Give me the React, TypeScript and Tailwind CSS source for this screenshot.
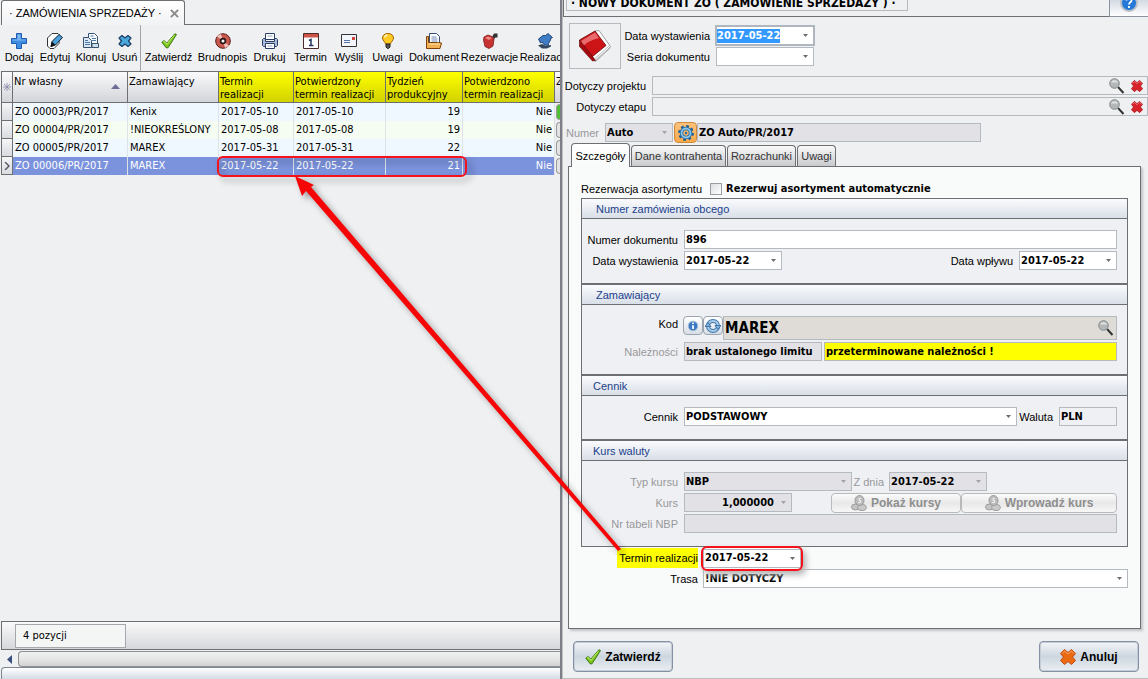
import type { ReactNode } from "react";
import clsx from "clsx";

const ui = "font-['Liberation_Sans',Arial,sans-serif] text-[11px] leading-4";
const tahoma = "font-['DejaVu_Sans_Condensed','DejaVu_Sans',sans-serif] text-[11px] leading-4";

/* ---------- toolbar icons ---------- */

const PlusIcon = () => (
  <svg viewBox="0 0 16 16" className="size-4">
    <path d="M5.500 .5h5v5h5v5h-5v5h-5v-5h-5v-5h5z" fill="#3f8be0" stroke="#1d5cae" />
    <path d="M6.500 1.500h3v5h5v1h-13v-1h5z" fill="#7db8f5" />
  </svg>
);

const EditIcon = () => (
  <svg viewBox="0 0 16 16" className="size-4">
    <path d="M.5 5L5 .5h6l1 1v9l-5 5H3L.5 13z" fill="#fff" stroke="#333" />
    <path d="M5 8.500L12 1.500l3.500 3L8.500 12l-4.500 1.500z" fill="#49a0dc" stroke="#123" />
    <path d="M5 8.500l3.500 3.500-5 2z" fill="#111" />
  </svg>
);

const CloneIcon = () => (
  <svg viewBox="0 0 16 16" className="size-4">
    <path d="M5.500 .5h6l3 3v8h-9z" fill="#f6fafd" stroke="#37526c" />
    <path d="M.5 4.500h5l3 3v7h-8z" fill="#dce9f4" stroke="#37526c" />
    <path d="M7.500 3h3M9 5.500h4M9 7.500h4M2 7.500h3M2 9.500h5M2 11.500h5" stroke="#4c7aa6" />
    <path d="M9 10.500h6.500v4H9z" fill="#cfe0ee" stroke="#37526c" />
  </svg>
);

const DeleteIcon = () => (
  <svg viewBox="0 0 16 16" className="size-4">
    <path d="M5 2.500L8 5l3-2.500 3 2.500-2.500 3 2.500 3-3 2.500L8 11l-3 2.500L2 11l2.500-3L2 5z" fill="#49a7dc" stroke="#1b3f66" strokeWidth="1.200" strokeLinejoin="round" />
  </svg>
);

const CheckIcon = ({ className = "size-4" }: { className?: string }) => (
  <svg viewBox="0 0 16 16" className={className}>
    <path d="M.8 9.200l2.400-1.700 2.600 2.700L13.800 .8l1.700.7L7 14.800H5.200z" fill="#7cc51d" stroke="#2f6d0c" strokeWidth=".9" />
    <path d="M2 9l1.200-.6 2.700 3L13.500 2" fill="none" stroke="#c3ef6c" />
  </svg>
);

const DiscIcon = () => (
  <svg viewBox="0 0 16 16" className="size-4">
    <circle cx="8" cy="8" r="7.300" fill="#c9584f" stroke="#591b1b" />
    <path d="M8 8L2 3.500A7 7 0 0 1 6 1zM8 8l6 4.500A7 7 0 0 1 10 15z" fill="#f3c4bb" />
    <circle cx="8" cy="8" r="3.200" fill="#2b1717" />
    <circle cx="8" cy="8" r="1.500" fill="#fff" />
  </svg>
);

const PrinterIcon = () => (
  <svg viewBox="0 0 16 16" className="size-4">
    <path d="M3.500 .5h9v6h-9z" fill="#fff" stroke="#2c3e63" />
    <path d="M1.500 5.500h2v3h9v-3h2l1 1v6l-1 1h-13l-1-1v-6z" fill="#a9bcd9" stroke="#2c3e63" />
    <path d="M3.500 10.500h9v5h-9z" fill="#fff" stroke="#2c3e63" />
    <path d="M5.500 3h5M5.500 13h5" stroke="#8fa4c6" />
  </svg>
);

const CalendarIcon = () => (
  <svg viewBox="0 0 16 16" className="size-4">
    <path d="M.5 .5h15v15H.5z" fill="#fff" stroke="#4c2a2a" />
    <path d="M1 1h14v3.500H1z" fill="#cc5548" />
    <path d="M6 7.500l2-1v6M6 12.500h4.500" fill="none" stroke="#26345f" strokeWidth="1.500" />
  </svg>
);

const MailIcon = () => (
  <svg viewBox="0 0 16 16" className="size-4">
    <path d="M.5 1.500h15v12H.5z" fill="#f2f5fb" stroke="#333" />
    <path d="M3 7.500h6M3 9.500h6" stroke="#5272a8" />
    <path d="M11 4h3v3h-3z" fill="#d2453b" />
  </svg>
);

const BulbIcon = () => (
  <svg viewBox="0 0 16 16" className="size-4">
    <path d="M8 .5c3.500 0 5.500 2 5.500 4.500S11 8.500 10.500 11h-5C5 8.500 2.500 7.500 2.500 5S4.500 .5 8 .5z" fill="#ffc926" stroke="#a86500" />
    <path d="M5 4.500C5 3 6 2 7.500 2" fill="none" stroke="#fff7c4" strokeWidth="1.500" />
    <path d="M6 11h4v3L8.500 15.500h-1L6 14z" fill="#555" stroke="#222" />
  </svg>
);

const FolderIcon = () => (
  <svg viewBox="0 0 16 16" className="size-4">
    <path d="M3.500 .5h7l3 3v8h-10z" fill="#fff" stroke="#3a4d78" />
    <path d="M5.500 4h5M5.500 6h6M5.500 8h6" stroke="#6f88b8" />
    <path d="M.5 3.500h2v6h9l4 .5-1.500 5.500H.5z" fill="#f0b055" stroke="#7c4308" />
    <path d="M3 11h11" stroke="#ffe0a5" />
  </svg>
);

const BarrelIcon = () => (
  <svg viewBox="0 0 16 16" className="size-4">
    <path d="M2 4l4-2 5 2 1 2-1 7-4 2.500-4-2L1.500 7z" fill="#c73232" stroke="#7c1717" strokeWidth=".8" />
    <path d="M3 5l3-1.500L10 5 7 7z" fill="#f08c83" />
    <path d="M10.500 3l1.500-2.500h3.500v4h-2L12 6z" fill="#333" />
  </svg>
);

const TransferIcon = () => (
  <svg viewBox="0 0 16 16" className="size-4">
    <path d="M1.500 6L6 2.500h2.500L11 .5l4.500 4-1.500.5-.5 2-2 3.500v2l-4-.5L5 9l-1.500 1z" fill="#3e7dc4" stroke="#173c70" strokeWidth=".9" />
    <path d="M1 12.500l4-1.500 4 2 5-1v1.500l-4 2H5z" fill="#33475f" />
  </svg>
);

/* ---------- form icons ---------- */

const BookIcon = () => (
  <svg viewBox="0 0 34 34" className="size-[34px]">
    <path d="M17 2l4-.5L32.500 17.500 31 20 17.500 32.500 14 27z" fill="#fff" stroke="#888" strokeWidth=".8" />
    <path d="M31 17L16.500 30M32 18.500L17 31.500" stroke="#999" strokeWidth=".7" />
    <path d="M1.500 11L17 2l11 14.500-13.500 11z" fill="#cc1417" stroke="#6c0508" strokeWidth=".8" />
    <path d="M3 12L17 3.500l4 5.500C14 11 8 13 5 18z" fill="#e86a6c" />
    <path d="M1.500 11L1.500 17.500 14.500 32l3-.5-3-4z" fill="#a60a0e" stroke="#5c0407" strokeWidth=".6" />
  </svg>
);

const Magnifier = () => (
  <svg viewBox="0 0 16 16" className="size-4">
    <path d="M9 9l5.500 6" stroke="#333" strokeWidth="2" />
    <circle cx="5.500" cy="5.500" r="4.800" fill="#b3b7b8" stroke="#858989" />
    <path d="M2 4.500c1-3 6-3 7 0z" fill="#dfe2e2" />
  </svg>
);

const CrossIcon = ({ orange = false, className = "size-3" }: { orange?: boolean; className?: string }) => (
  <svg viewBox="0 0 16 16" className={className}>
    <path
      d="M4.500 .5L8 3.500l3.500-3 4 4L12.500 8l3 3.500-4 4L8 12.500l-3.500 3-4-4L3.500 8l-3-3.500z"
      fill={orange ? "#ea6a12" : "#d8232a"}
      stroke={orange ? "#c04a0c" : "#a3161b"}
      strokeLinejoin="round"
    />
    <path d="M2 4.500L4.500 2l3.500 3 3.500-3L14 4.500" fill="none" stroke={orange ? "#ffa466" : "#f08084"} />
  </svg>
);

const GearIcon = () => (
  <svg viewBox="0 0 16 16" className="size-4">
    <circle cx="8" cy="8" r="6.800" fill="none" stroke="#1c5f94" strokeWidth="2.200" strokeDasharray="2.700 2.640" />
    <circle cx="8" cy="8" r="4.500" fill="none" stroke="#1f6ba6" strokeWidth="3.500" />
    <circle cx="8" cy="8" r="4.500" fill="none" stroke="#8cc6e8" strokeWidth="1.800" />
    <circle cx="8" cy="8" r="1.200" fill="#1f6ba6" />
  </svg>
);

const InfoIcon = () => (
  <svg viewBox="0 0 16 16" className="size-[14px]">
    <circle cx="8" cy="8" r="5.500" fill="#3b79c4" stroke="#a9c0da" />
    <path d="M8 7v4.500M8 4v1.800" stroke="#fff" strokeWidth="2" />
  </svg>
);

const RefreshIcon = () => (
  <svg viewBox="0 0 16 16" className="size-4">
    <circle cx="8" cy="8" r="5" fill="none" stroke="#3f78ac" strokeWidth="4" />
    <circle cx="8" cy="8" r="5" fill="none" stroke="#a9cdea" strokeWidth="2.200" />
    <path d="M0 8.500l3-4 3 4zM10 7.500h6l-3 4z" fill="#7db2de" stroke="#2e659a" strokeWidth=".8" />
  </svg>
);

const CoinsIcon = () => (
  <svg viewBox="0 0 16 16" className="size-4">
    <ellipse cx="4.500" cy="12" rx="4" ry="3" fill="#c4c4c4" stroke="#9c9c9c" />
    <ellipse cx="11" cy="12.500" rx="4.300" ry="3" fill="#c9c9c9" stroke="#9c9c9c" />
    <ellipse cx="8.500" cy="5.500" rx="4.500" ry="5" fill="#bdbdbd" stroke="#999" />
    <path d="M10 3.500H8v2h1.500v2H7" fill="none" stroke="#f1f1f1" />
  </svg>
);

const HelpIcon = () => (
  <svg viewBox="0 0 18 18" className="size-[18px]">
    <circle cx="9" cy="9" r="8" fill="#2378d8" stroke="#b9bfc6" strokeWidth="2" />
    <path d="M6.500 6.500c0-3 5-3 5 0 0 1.800-2.500 1.800-2.500 4M9 12v2" fill="none" stroke="#fff" strokeWidth="1.800" />
  </svg>
);

const Caret = ({ muted = false }: { muted?: boolean }) => (
  <svg viewBox="0 0 5 3" className="h-[3px] w-[5px]">
    <path d="M0 0h5L2.500 3z" fill={muted ? "#a3a3a6" : "#6d6d6d"} />
  </svg>
);

/* ---------- list ---------- */

const toolbar: { label: string; width: string; icon: ReactNode }[] = [
  { label: "Dodaj", width: "w-9", icon: <PlusIcon /> },
  { label: "Edytuj", width: "w-9", icon: <EditIcon /> },
  { label: "Klonuj", width: "w-9", icon: <CloneIcon /> },
  { label: "Usuń", width: "w-[31px]", icon: <DeleteIcon /> },
  { label: "Zatwierdź", width: "w-14", icon: <CheckIcon /> },
  { label: "Brudnopis", width: "w-[53px]", icon: <DiscIcon /> },
  { label: "Drukuj", width: "w-[41px]", icon: <PrinterIcon /> },
  { label: "Termin", width: "w-[41px]", icon: <CalendarIcon /> },
  { label: "Wyślij", width: "w-9", icon: <MailIcon /> },
  { label: "Uwagi", width: "w-[41px]", icon: <BulbIcon /> },
  { label: "Dokument", width: "w-[52px]", icon: <FolderIcon /> },
  { label: "Rezerwacje", width: "w-[59px]", icon: <BarrelIcon /> },
  { label: "Realizacja", width: "w-[52px]", icon: <TransferIcon /> },
];

const orders = [
  { no: "ZO 00003/PR/2017", customer: "Kenix", due: "2017-05-10", confirmed: "2017-05-10", week: 19 },
  { no: "ZO 00004/PR/2017", customer: "!NIEOKREŚLONY", due: "2017-05-08", confirmed: "2017-05-08", week: 19 },
  { no: "ZO 00005/PR/2017", customer: "MAREX", due: "2017-05-31", confirmed: "2017-05-31", week: 22 },
  { no: "ZO 00006/PR/2017", customer: "MAREX", due: "2017-05-22", confirmed: "2017-05-22", week: 21 },
];

const rowTone = ["bg-[#f0f8ff]", "bg-[#f5fdf2]", "bg-[#f0f8ff]", "bg-[#7b92dc] text-white"];

const th = "border-r border-[#6d6f73] px-px pt-[3px] align-top text-left font-normal leading-[13px]";
const plainHead = "bg-linear-to-b from-[#fafafb] to-[#d3d5da]";
const markedHead = "bg-linear-to-b from-[#ffff00] to-[#d2d200]";
const td = "h-[18px] overflow-hidden border-r border-[#dfe3e8] px-[2px] py-0 whitespace-nowrap";

function OrdersTable() {
  return (
    <table className={clsx(tahoma, "w-full table-fixed border-separate border-spacing-0 border-l border-[#6d6f73]")}>
      <colgroup>
        <col className="w-[11px]" />
        <col className="w-[115px]" />
        <col className="w-[91px]" />
        <col className="w-[75px]" />
        <col className="w-[92px]" />
        <col className="w-[77px]" />
        <col className="w-[92px]" />
        <col />
      </colgroup>
      <thead>
        <tr className="h-8 [&>th]:border-t [&>th]:border-b">
          <th className={clsx(th, plainHead)}>
            <svg viewBox="0 0 8 8" className="mt-2 size-2">
              <path d="M4 0v8M0 4h8M1 1l6 6M7 1L1 7" stroke="#8888aa" strokeWidth=".8" />
            </svg>
          </th>
          <th className={clsx(th, plainHead)}>
            <span className="flex justify-between pr-1.5">
              Nr własny
              <svg viewBox="0 0 9 5" className="mt-[9px] h-[5px] w-[9px]">
                <path d="M4.500 0L9 5H0z" fill="#6d6d96" />
              </svg>
            </span>
          </th>
          <th className={clsx(th, plainHead)}>Zamawiający</th>
          <th className={clsx(th, markedHead)}>Termin<br />realizacji</th>
          <th className={clsx(th, markedHead)}>Potwierdzony<br />termin realizacji</th>
          <th className={clsx(th, markedHead)}>Tydzień<br />produkcyjny</th>
          <th className={clsx(th, markedHead)}>Potwierdzono<br />termin realizacji</th>
          <th className={clsx(th, plainHead, "overflow-hidden border-r-0")}>Z</th>
        </tr>
      </thead>
      <tbody>
        {orders.map((o, i) => (
          <tr key={o.no} className={rowTone[i]}>
            <td className="border-r border-b border-[#6d6f73] bg-linear-to-b from-[#f6f6f7] to-[#d9dbdf] p-0">
              {i === 3 && (
                <svg viewBox="0 0 6 8" className="ml-[2px] h-2 w-1.5">
                  <path d="M1 0l4 4-4 4" fill="none" stroke="#5a5a6c" strokeWidth="1.500" />
                </svg>
              )}
            </td>
            <td className={td}>{o.no}</td>
            <td className={td}>{o.customer}</td>
            <td className={td}>{o.due}</td>
            <td className={td}>{o.confirmed}</td>
            <td className={clsx(td, "text-right")}>{o.week}</td>
            <td className={clsx(td, "text-right")}>Nie</td>
            <td className="bg-[#eff0f2] p-0 pl-px">
              <div className={clsx("h-4 rounded-l-sm border border-r-0 border-[#9a9a9a]", i === 0 ? "bg-[#4fbf35]" : "bg-[#e4e4e4]")} />
            </td>
          </tr>
        ))}
      </tbody>
    </table>
  );
}

function OrdersPane() {
  return (
    <section className="flex min-w-0 flex-col overflow-hidden bg-[#eff0f2] pl-px">
      <div className="flex">
        <div className={clsx(ui, "flex h-[25px] w-[184px] items-center justify-between rounded-t-[3px] border border-b-0 border-[#6d6f73] bg-linear-to-b from-white to-[#f1f2f4] pr-[5px] pl-[7px] whitespace-nowrap")}>
          <span>· ZAMÓWIENIA SPRZEDAŻY ·</span>
          <button type="button" aria-label="Zamknij">
            <svg viewBox="0 0 10 10" className="size-[9px]">
              <path d="M1 1l8 8M9 1L1 9" stroke="#8b8b8b" strokeWidth="2.200" />
            </svg>
          </button>
        </div>
        <div className="flex-1 border-b border-[#6d6f73]" />
      </div>
      <div className={clsx(ui, "flex h-[46px] items-start overflow-hidden")}>
        {toolbar.map((b, i) => (
          <button
            key={b.label}
            type="button"
            className={clsx("flex h-full shrink-0 flex-col items-center pt-2 whitespace-nowrap", b.width, i === 4 && "border-l border-[#a3a4a8]")}
          >
            {b.icon}
            {b.label}
          </button>
        ))}
      </div>
      <OrdersTable />
      <div className="flex-1" />
      <div className="flex h-[29px] items-center border-y border-l border-[#6d6f73] bg-linear-to-b from-[#fafafa] to-[#d6d7db] pl-[13px]">
        <div className={clsx(tahoma, "flex h-6 w-[111px] items-center border border-[#a5a9ad] bg-[#f4f6f6] pl-[7px]")}>4 pozycji</div>
      </div>
      <div className="flex h-[17px] items-center pt-px">
        <button type="button" aria-label="Przewiń w lewo" className="flex w-[17px] justify-center">
          <svg viewBox="0 0 5 9" className="h-[9px] w-[5px]">
            <path d="M5 0v9L0 4.500z" fill="#39507e" />
          </svg>
        </button>
        <div className="h-4 flex-1 rounded-l-sm border border-r-0 border-[#8f9092] bg-linear-to-b from-[#f0f0f0] via-[#e6e6e6] to-[#d2d2d2]" />
      </div>
      <div className="h-3 rounded-tl-sm border-t border-l border-[#7f8792] bg-linear-to-b from-white to-[#d5dce5]" />
    </section>
  );
}

/* ---------- form controls ---------- */

const box = "h-[19px] min-w-0 border border-[#b5bac0]";
const strong = "font-['DejaVu_Sans_Condensed','DejaVu_Sans',sans-serif] text-[11px] leading-4 font-bold";
const caption = "font-['Liberation_Sans',Arial,sans-serif] text-[12px] leading-4 font-bold";

function Combo({ id, value, className, date, disabled, right }: {
  id: string; value: string; className?: string; date?: boolean; disabled?: boolean; right?: boolean;
}) {
  const frame = clsx(box, "flex items-center", disabled ? "bg-[#e2e1e6]" : "bg-white", className);
  if (date || right) {
    return (
      <div className={frame}>
        <input id={id} defaultValue={value} className={clsx(strong, "w-0 flex-1 bg-transparent px-px outline-none", right && "text-right")} />
        <button type="button" aria-label="Rozwiń" className="flex h-full w-4 items-center justify-center">
          <Caret muted={disabled} />
        </button>
      </div>
    );
  }
  return (
    <div className={frame}>
      <select id={id} className={clsx(strong, "w-0 flex-1 appearance-none bg-transparent px-px outline-none")}>
        <option>{value}</option>
      </select>
      <span className="flex w-4 justify-center"><Caret muted={disabled} /></span>
    </div>
  );
}

function Label({ htmlFor, className, muted, children }: { htmlFor: string; className?: string; muted?: boolean; children: ReactNode }) {
  return (
    <label htmlFor={htmlFor} className={clsx(ui, "shrink-0 text-right whitespace-nowrap", muted && "text-[#97989b]", className)}>
      {children}
    </label>
  );
}

function Group({ title, className, children }: { title: string; className?: string; children: ReactNode }) {
  return (
    <fieldset className="block border border-[#6d6f73] bg-[#eff0f3]">
      <div className={clsx(ui, "h-5 border-b border-[#6d6f73] bg-linear-to-b from-[#fafbfd] to-[#d9dfe8] pt-0.5 text-[#1a3f8c]", className)}>{title}</div>
      <div className="flex flex-col gap-0.5 pt-[11px] pr-[10px] pb-[13px]">{children}</div>
    </fieldset>
  );
}

const row = "flex items-center";
const smallButton = "flex h-[19px] w-5 items-center justify-center rounded-sm border border-[#9aa3ae] bg-linear-to-b from-white to-[#d8dee6]";
const rateButton = "flex h-5 items-center justify-center gap-1 rounded-sm border border-[#b9b9b9] bg-linear-to-b from-[#fbfbfb] via-[#e8e8e8] to-[#f7f7f7] text-[#8e8e8e]";
const bigButton = "flex h-[31px] w-[100px] items-center justify-center gap-1 rounded-sm border border-[#8490a3] bg-linear-to-b from-[#f3f6f9] via-[#cdd6df] to-[#e9eef2] shadow-[inset_0_0_0_1px_#c4ccd8]";
const idleTab = "mb-px h-[21px] rounded-t-sm border border-b-0 border-[#6d6f73] bg-linear-to-b from-[#fafafa] to-[#c9cacd] whitespace-nowrap text-[#333]";

function LookupRow({ id, label }: { id: string; label: string }) {
  return (
    <div className={row}>
      <Label htmlFor={id} className="w-[83px]">{label}</Label>
      <div className={clsx(box, "ml-1.5 flex flex-1 items-center")}>
        <input id={id} className={clsx(strong, "w-0 flex-1 bg-transparent outline-none")} />
        <button type="button" aria-label="Szukaj" className="mr-1.5"><Magnifier /></button>
        <button type="button" aria-label="Wyczyść" className="mr-1"><CrossIcon /></button>
      </div>
    </div>
  );
}

function DetailsPanel() {
  return (
    <div className="mr-[7px] ml-[5px] flex-1 border border-[#6d6f73] bg-[#f9fafa] px-3 pt-3 shadow-[2px_2px_2px_#c4c5c8]">
      <div className="flex h-[19px] items-center">
        <span className={ui}>Rezerwacja asortymentu</span>
        <label className={clsx(strong, "ml-2 flex items-center gap-1")}>
          <input type="checkbox" className="size-3 appearance-none border border-[#9a9da2] bg-linear-to-br from-[#dcdee2] to-white" />
          Rezerwuj asortyment automatycznie
        </label>
      </div>

      <Group title="Numer zamówienia obcego" className="pl-3.5">
        <div className={row}>
          <Label htmlFor="foreign-no" className="w-24">Numer dokumentu</Label>
          <input id="foreign-no" defaultValue="896" className={clsx(box, strong, "ml-1.5 flex-1 bg-white px-px outline-none")} />
        </div>
        <div className={row}>
          <Label htmlFor="foreign-date" className="w-24">Data wystawienia</Label>
          <Combo id="foreign-date" value="2017-05-22" date className="ml-1.5 w-[98px]" />
          <Label htmlFor="received" className="ml-auto">Data wpływu</Label>
          <Combo id="received" value="2017-05-22" date className="ml-1.5 w-[98px]" />
        </div>
      </Group>

      <Group title="Zamawiający" className="pl-3.5">
        <div className="flex items-start">
          <Label htmlFor="code" className="w-24">Kod</Label>
          <div className="ml-[5px] flex">
            <button type="button" aria-label="Informacje" className={smallButton}><InfoIcon /></button>
            <button type="button" aria-label="Odśwież" className={smallButton}><RefreshIcon /></button>
          </div>
          <div className="flex h-6 min-w-0 flex-1 items-center border border-[#b5bac0] bg-[#dfdcd8] pr-0.5">
            <input id="code" defaultValue="MAREX" className="w-0 flex-1 bg-transparent px-px font-['DejaVu_Sans_Condensed','DejaVu_Sans',sans-serif] text-[15px] leading-5 font-bold outline-none" />
            <button type="button" aria-label="Szukaj"><Magnifier /></button>
          </div>
        </div>
        <div className={row}>
          <Label htmlFor="dues" muted className="w-24">Należności</Label>
          <input id="dues" readOnly value="brak ustalonego limitu" className={clsx(box, strong, "ml-1.5 w-[138px] bg-[#e2e1e6] px-px outline-none")} />
          <input aria-label="Stan należności" readOnly value="przeterminowane należności !" className={clsx(box, strong, "ml-0.5 flex-1 bg-[#ffff00] px-px outline-none")} />
        </div>
      </Group>

      <Group title="Cennik" className="pl-[11px]">
        <div className={row}>
          <Label htmlFor="pricelist" className="w-24">Cennik</Label>
          <Combo id="pricelist" value="PODSTAWOWY" className="ml-1.5 flex-1" />
          <Label htmlFor="currency" className="w-9">Waluta</Label>
          <input id="currency" readOnly value="PLN" className={clsx(box, strong, "ml-1.5 w-[58px] px-px outline-none")} />
        </div>
      </Group>

      <Group title="Kurs waluty" className="pl-[11px]">
        <div className={row}>
          <Label htmlFor="rate-type" muted className="w-24">Typ kursu</Label>
          <Combo id="rate-type" value="NBP" disabled className="ml-1.5 w-[168px]" />
          <Label htmlFor="rate-date" muted className="w-8">Z dnia</Label>
          <Combo id="rate-date" value="2017-05-22" date disabled className="ml-[5px] w-[98px]" />
        </div>
        <div className={clsx(row, "h-[19px]")}>
          <Label htmlFor="rate" muted className="w-24">Kurs</Label>
          <Combo id="rate" value="1,000000" right disabled className="ml-1.5 w-[108px]" />
          <button type="button" className={clsx(caption, rateButton, "ml-auto w-[130px]")}><CoinsIcon />Pokaż kursy</button>
          <button type="button" className={clsx(caption, rateButton, "w-[156px]")}><CoinsIcon />Wprowadź kurs</button>
        </div>
        <div className={row}>
          <Label htmlFor="rate-table" muted className="w-24">Nr tabeli NBP</Label>
          <input id="rate-table" className={clsx(box, "ml-1.5 flex-1 bg-[#e2e1e6] outline-none")} />
        </div>
      </Group>

      <div className="flex flex-col pt-px">
        <div className={row}>
          <div className="flex w-[117px] justify-end">
            <Label htmlFor="due" className="bg-[#ffff00] py-0.5 pl-0.5">Termin realizacji</Label>
          </div>
          <div className="relative ml-[5px]">
            <Combo id="due" value="2017-05-22" date className="w-[98px]" />
            <div className="pointer-events-none absolute -inset-x-0.5 -inset-y-[3px] rounded-md border-2 border-[#f5121a] shadow-[3px_4px_6px_#b5b5b5]" />
          </div>
        </div>
        <div className="flex items-center pt-px">
          <Label htmlFor="route" className="w-[117px]">Trasa</Label>
          <Combo id="route" value="!NIE DOTYCZY" className="ml-[5px] flex-1" />
        </div>
      </div>
    </div>
  );
}

function DocumentPane() {
  return (
    <section className="flex min-w-0 flex-col overflow-hidden border-l-2 border-[#7d7f88] bg-[#eff0f2]">
      <div className="flex flex-1 flex-col border-b border-l border-[#c2bfc4]">
        <header className="flex h-[17px]">
          <div className="min-w-0 flex-1 overflow-hidden border-b border-l border-[#6d6f73] pl-0.5">
            <h1 className="flex h-[11px] w-[342px] items-center border border-t-0 border-[#b5bac0] pb-1 pl-1 font-['DejaVu_Sans_Condensed','DejaVu_Sans',sans-serif] text-[12px] font-bold whitespace-nowrap">
              · NOWY DOKUMENT ZO ( ZAMÓWIENIE SPRZEDAŻY ) ·
            </h1>
          </div>
          <button type="button" aria-label="Pomoc" className="flex w-[39px] items-end justify-center overflow-hidden border-b border-l border-[#8b93a0] bg-linear-to-b from-[#d3dae3] to-white pb-1">
            <HelpIcon />
          </button>
        </header>

        <div className="flex pt-1.5 pl-1.5">
          <div className="flex h-[46px] w-[52px] items-center justify-center border border-[#b5bac0]"><BookIcon /></div>
          <div className="flex flex-col gap-px pt-0.5">
            <div className={row}>
              <Label htmlFor="issued" className="w-[89px]">Data wystawienia</Label>
              <div className="ml-[5px] flex h-[21px] w-[100px] items-center border-2 border-[#b0b6bf] bg-white">
                <div className="flex flex-1">
                  <input id="issued" defaultValue="2017-05-22" className={clsx(strong, "field-sizing-content h-[14px] bg-[#3399ff] text-white outline-none")} />
                </div>
                <button type="button" aria-label="Rozwiń" className="flex w-4 justify-center"><Caret /></button>
              </div>
            </div>
            <div className={row}>
              <Label htmlFor="series" className="w-[89px]">Seria dokumentu</Label>
              <Combo id="series" value="" className="ml-1.5 w-[98px]" />
            </div>
          </div>
        </div>

        <div className="flex flex-col gap-0.5 pt-[7px]">
          <LookupRow id="project" label="Dotyczy projektu" />
          <LookupRow id="stage" label="Dotyczy etapu" />
        </div>

        <div className="flex items-center pt-1.5">
          <Label htmlFor="number" muted className="w-9">Numer</Label>
          <Combo id="number" value="Auto" disabled className="ml-1.5 w-[68px]" />
          <button type="button" aria-label="Ustawienia numeru" className="ml-px flex h-[21px] w-[23px] items-center justify-center rounded-sm border border-[#d08a3c] bg-linear-to-b from-[#fcc27b] to-[#f9a94b]"><GearIcon /></button>
          <input aria-label="Numer dokumentu" readOnly value="ZO Auto/PR/2017" className={clsx(box, strong, "mr-[167px] flex-1 bg-[#e2e1e6] px-px outline-none")} />
        </div>

        <nav role="tablist" className={clsx(ui, "relative z-10 -mb-px flex items-end gap-px pl-2")}>
          <button type="button" role="tab" aria-selected className="h-6 w-[59px] rounded-t-sm border border-b-0 border-[#6d6f73] bg-linear-to-b from-white to-[#f9fafa]">Szczegóły</button>
          <button type="button" role="tab" className={clsx(idleTab, "w-[95px]")}>Dane kontrahenta</button>
          <button type="button" role="tab" className={clsx(idleTab, "w-[69px]")}>Rozrachunki</button>
          <button type="button" role="tab" className={clsx(idleTab, "w-[39px]")}>Uwagi</button>
        </nav>
        <DetailsPanel />

        <footer className="flex justify-between pt-3 pr-[9px] pb-1.5 pl-2.5">
          <button type="button" className={clsx(caption, bigButton)}><CheckIcon />Zatwierdź</button>
          <button type="button" className={clsx(caption, bigButton)}><CrossIcon orange className="size-4" />Anuluj</button>
        </footer>
      </div>
    </section>
  );
}

/* Callout linking the form's due date with the row in the list */
function Callout() {
  return (
    <svg width="1148" height="679" className="pointer-events-none absolute top-0 left-0 z-20 drop-shadow-[4px_4px_3px_rgba(0,0,0,0.35)]">
      <rect x="218" y="157" width="248" height="19" rx="5" fill="none" stroke="#f5121a" strokeWidth="2" />
      <path d="M295 176l19 9-3 2L621 549l-3 2L306 191l-4 5z" fill="#f50505" />
    </svg>
  );
}

export default function App() {
  return (
    <main className="relative grid min-h-screen grid-cols-[minmax(0,560fr)_minmax(0,588fr)] overflow-hidden bg-[#eff0f2] text-black">
      <OrdersPane />
      <DocumentPane />
      <Callout />
    </main>
  );
}
